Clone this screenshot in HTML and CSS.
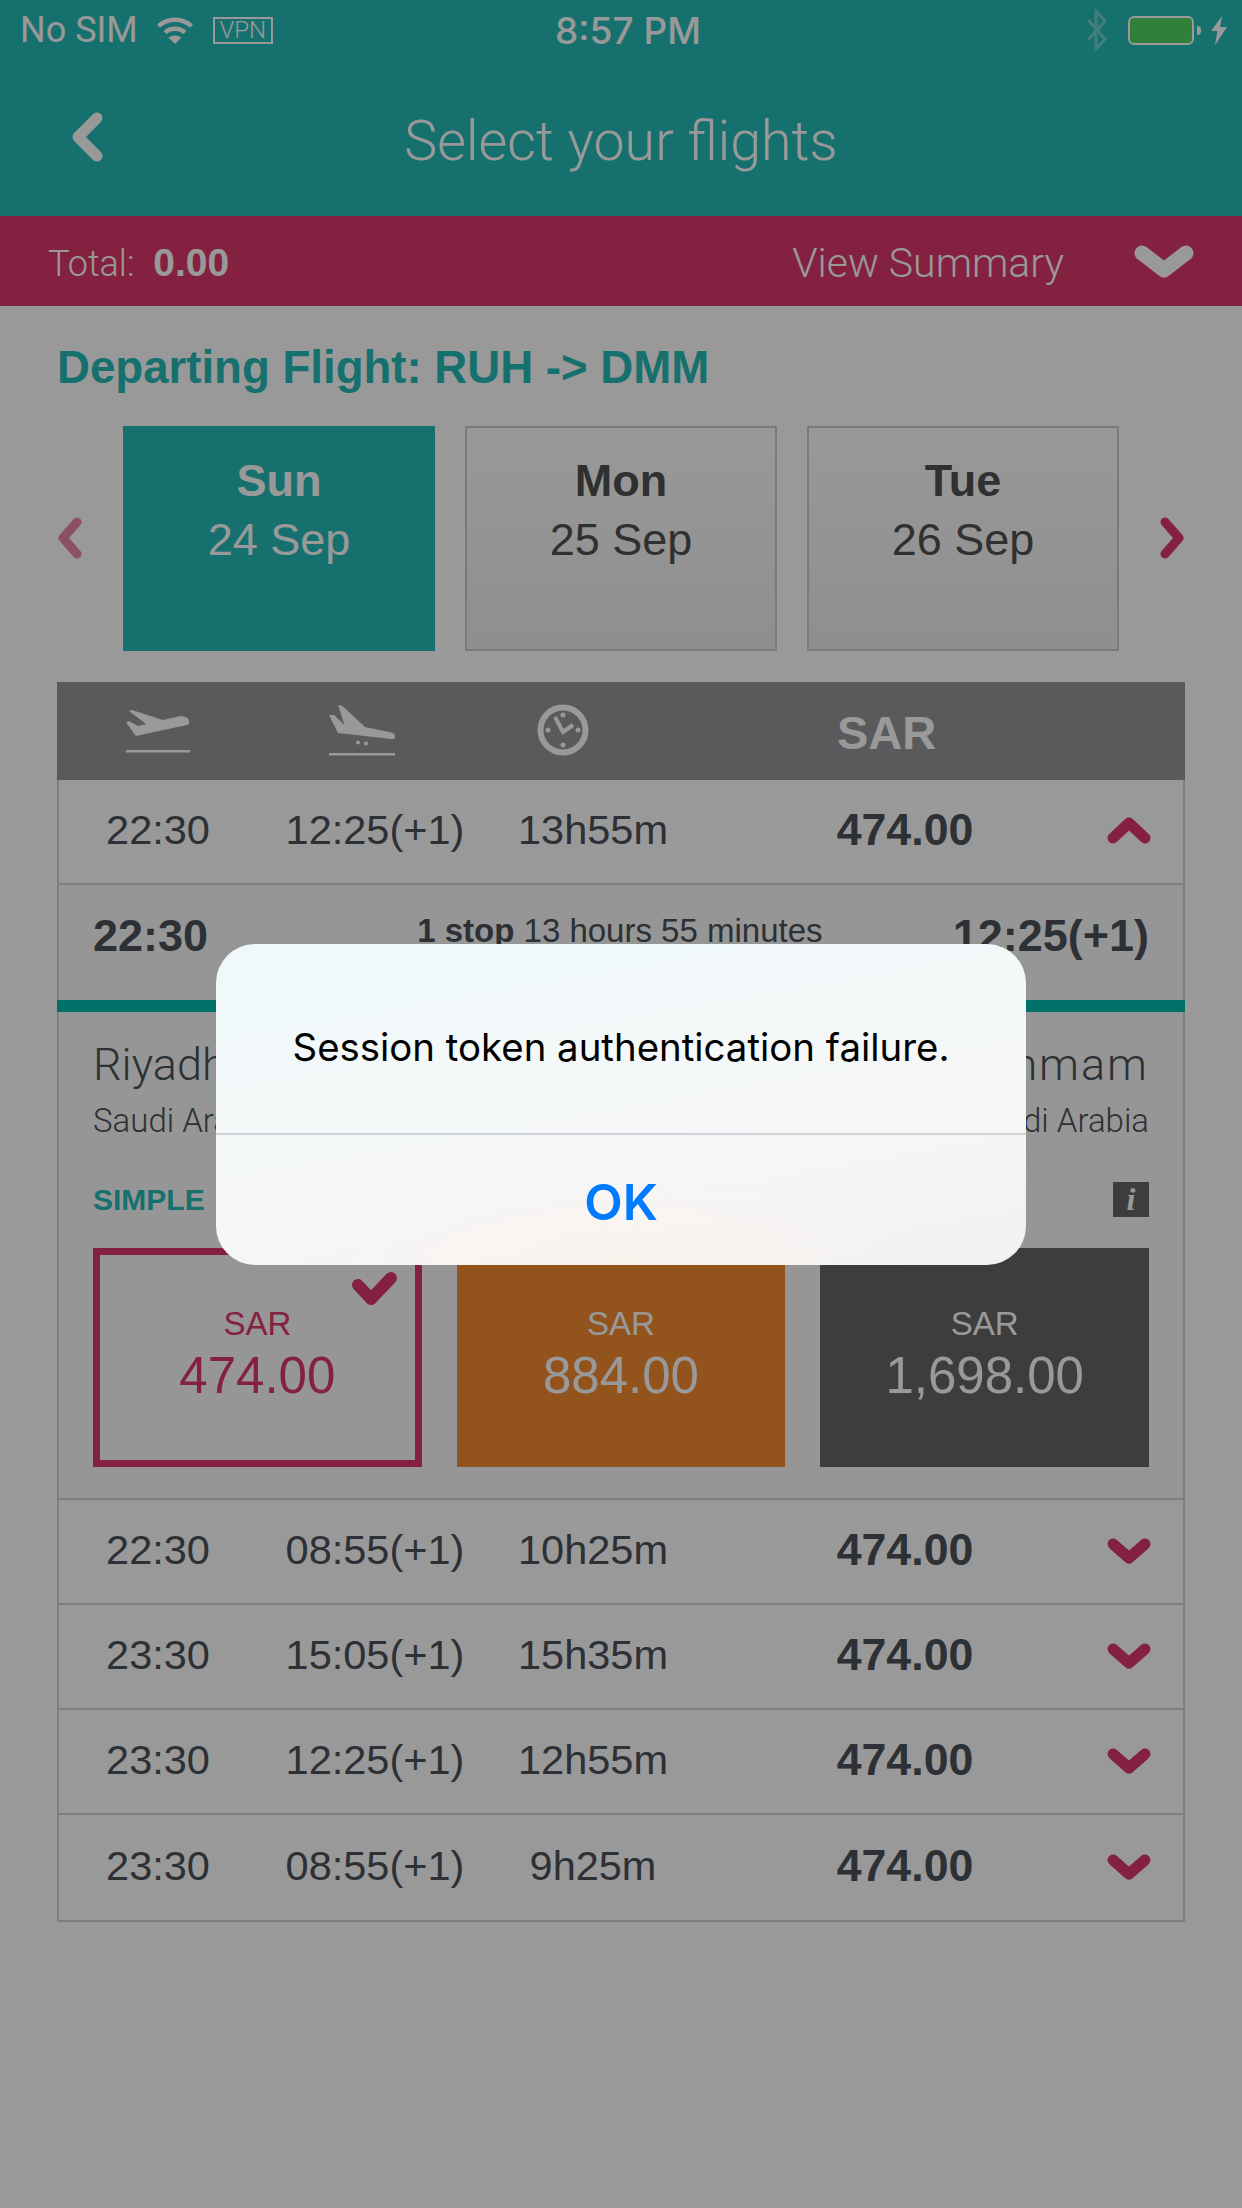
FILE: index.html
```html
<!DOCTYPE html>
<html lang="en">
<head>
    <meta charset="UTF-8">
    <meta name="viewport" content="width=device-width, initial-scale=1.0">
    <title>Select your flights</title>
    <link rel="stylesheet" href="styles.css">
</head>
<body>

<!-- Top bars -->
<header class="top">
    <div class="status">
        <div class="status-left">
            <span>No SIM</span>
            <svg class="wifi" viewBox="0 0 36 27"><path d="M1.5 9A25 25 0 0 1 34.500 9M8 15.500A15 15 0 0 1 28 15.500" fill="none" stroke="#fff" stroke-width="4.500"/><path d="M11.500 20.500Q18 16.500 24.500 20.500L18 27Z" fill="#fff"/></svg>
            <span class="vpn">VPN</span>
        </div>
        <div class="status-time">8:57 PM</div>
        <div class="status-right">
            <svg class="bt" viewBox="0 0 24 42"><path d="M3 11L20 30L11 40V2L20 12L3 31" fill="none" stroke="#fff" stroke-width="3"/></svg>
            <div class="battery"></div>
            <svg class="bolt" viewBox="0 0 16 29"><path d="M11 0L0 15H6.500L4 29L16 11H9Z" fill="#fff"/></svg>
        </div>
    </div>
    <div class="nav">
        <svg class="back" viewBox="0 0 32 50"><path d="M26 6L7 25L26 44" fill="none" stroke="#fff" stroke-width="11" stroke-linecap="round" stroke-linejoin="round"/></svg>
        <h1>Select your flights</h1>
    </div>
</header>

<div class="summary">
    <div class="total">Total: <b>0.00</b></div>
    <div class="view">View Summary</div>
    <svg class="view-arrow" viewBox="0 0 60 34"><path d="M8 8L30 25L52 8" fill="none" stroke="#fff" stroke-width="15" stroke-linecap="round" stroke-linejoin="round"/></svg>
</div>

<main class="content">
    <h2>Departing Flight: RUH -&gt; DMM</h2>

    <!-- Date picker -->
    <div class="dates">
        <svg class="date-arrow faded" viewBox="0 0 25 42"><path d="M20 5L6 21L20 37" fill="none" stroke="#dc376b" stroke-width="9" stroke-linecap="round" stroke-linejoin="round"/></svg>
        <div class="date-list">
            <div class="date active"><b>Sun</b><span>24 Sep</span></div>
            <div class="date"><b>Mon</b><span>25 Sep</span></div>
            <div class="date"><b>Tue</b><span>26 Sep</span></div>
        </div>
        <svg class="date-arrow" viewBox="0 0 25 42"><path d="M5 5L19 21L5 37" fill="none" stroke="#dc376b" stroke-width="9" stroke-linecap="round" stroke-linejoin="round"/></svg>
    </div>

    <!-- Flights table -->
    <div class="flights">
        <div class="flights-head">
            <svg class="takeoff" viewBox="0 0 64 44"><path d="M63 11Q63 7 55 6L37 10L6 0L3 1L20 14L12 16L3 11L0 12.500L10 26L61 15Q64 14 63 11Z" fill="#fff"/><rect y="40" width="64" height="2.500" fill="#fff"/></svg>
            <svg class="landing" viewBox="0 0 66 51"><path d="M9 0L13.500 1L36 22L60 27Q67 28 66 32Q65.500 35 62 34L9 28L0 10L5 10L15.500 20Z" fill="#fff"/><circle cx="29" cy="37.500" r="2" fill="#fff"/><circle cx="37" cy="38.500" r="2" fill="#fff"/><rect y="48" width="66" height="2.500" fill="#fff"/></svg>
            <svg class="clock" viewBox="0 0 52 52"><circle cx="26" cy="26" r="22.500" fill="none" stroke="#fff" stroke-width="6"/><path d="M18 13L26 28L36 21" fill="none" stroke="#fff" stroke-width="4"/><circle cx="26" cy="11" r="2.500" fill="#fff"/><circle cx="41" cy="26" r="2.500" fill="#fff"/><circle cx="26" cy="41" r="2.500" fill="#fff"/><circle cx="11" cy="26" r="2.500" fill="#fff"/></svg>
            <div class="head-sar">SAR</div>
        </div>

        <div class="row">
            <span>22:30</span><span>12:25(+1)</span><span>13h55m</span><b>474.00</b>
            <svg class="chev" viewBox="0 0 44 28"><path d="M6 22L22 7L38 22" fill="none" stroke="#dc376b" stroke-width="11" stroke-linecap="round" stroke-linejoin="round"/></svg>
        </div>

        <div class="detail">
            <div class="detail-top">
                <b>22:30</b>
                <span class="stops"><b>1 stop</b> 13 hours 55 minutes</span>
                <b>12:25(+1)</b>
            </div>
            <div class="detail-body">
                <div class="cities">
                    <div>
                        <div class="city">Riyadh</div>
                        <div class="country">Saudi Arabia</div>
                    </div>
                    <div class="to">
                        <div class="city">Dammam</div>
                        <div class="country">Saudi Arabia</div>
                    </div>
                </div>
                <div class="fare-head">
                    <span class="fare-name">SIMPLE</span>
                    <span class="info">i</span>
                </div>
                <div class="fares">
                    <div class="fare picked">
                        <svg class="tick" viewBox="0 0 46 34"><path d="M7 13L20 27L40 6" fill="none" stroke="#dc376b" stroke-width="12" stroke-linecap="round" stroke-linejoin="round"/></svg>
                        <span>SAR</span><strong>474.00</strong>
                    </div>
                    <div class="fare orange"><span>SAR</span><strong>884.00</strong></div>
                    <div class="fare dark"><span>SAR</span><strong>1,698.00</strong></div>
                </div>
            </div>
        </div>

        <div class="row">
            <span>22:30</span><span>08:55(+1)</span><span>10h25m</span><b>474.00</b>
            <svg class="chev" viewBox="0 0 44 28"><path d="M6 8L22 22L38 8" fill="none" stroke="#dc376b" stroke-width="11" stroke-linecap="round" stroke-linejoin="round"/></svg>
        </div>
        <div class="row">
            <span>23:30</span><span>15:05(+1)</span><span>15h35m</span><b>474.00</b>
            <svg class="chev" viewBox="0 0 44 28"><path d="M6 8L22 22L38 8" fill="none" stroke="#dc376b" stroke-width="11" stroke-linecap="round" stroke-linejoin="round"/></svg>
        </div>
        <div class="row">
            <span>23:30</span><span>12:25(+1)</span><span>12h55m</span><b>474.00</b>
            <svg class="chev" viewBox="0 0 44 28"><path d="M6 8L22 22L38 8" fill="none" stroke="#dc376b" stroke-width="11" stroke-linecap="round" stroke-linejoin="round"/></svg>
        </div>
        <div class="row">
            <span>23:30</span><span>08:55(+1)</span><span>9h25m</span><b>474.00</b>
            <svg class="chev" viewBox="0 0 44 28"><path d="M6 8L22 22L38 8" fill="none" stroke="#dc376b" stroke-width="11" stroke-linecap="round" stroke-linejoin="round"/></svg>
        </div>
    </div>
</main>

<!-- Alert over dimmed page -->
<div class="dim">
    <div class="alert">
        <p class="alert-msg">Session token authentication failure.</p>
        <div class="alert-btn">OK</div>
    </div>
</div>

</body>
</html>
```

FILE: styles.css
```css
* {
  box-sizing: border-box;
}

body {
  margin: 0;
  width: 1242px;
  height: 2208px;
  overflow: hidden;
  position: relative;
  background-color: #fff;
  color: #4b5058;
  font-family: 'Liberation Sans', Arial, sans-serif;
}

/* Top bars */
.top {
  height: 216px;
  background-color: #25bcb7;
  color: #fff;
}

.status {
  height: 60px;
  padding: 0 15px 0 20px;
  display: grid;
  grid-template-columns: 1fr auto 1fr;
  align-items: center;
  font-family: Roboto, sans-serif;
  font-size: 36px;
}

.status-left {
  display: flex;
  align-items: center;
}

.wifi {
  width: 36px;
  height: 27px;
  margin-left: 19px;
}

.vpn {
  margin-left: 20px;
  width: 60px;
  height: 27px;
  border: 2px solid #fff;
  font-weight: 300;
  font-size: 24px;
  line-height: 23px;
  text-align: center;
}

.status-time {
  margin-left: 9px;
  font-family: Inter, sans-serif;
  font-weight: 500;
  font-size: 37px;
}

.status-right {
  display: flex;
  align-items: center;
  justify-content: flex-end;
}

.bt {
  width: 24px;
  height: 42px;
  opacity: 0.35;
}

.battery {
  position: relative;
  width: 66px;
  height: 29px;
  margin-left: 19px;
  background-color: #52d562;
  border: 2px solid #fff;
  border-radius: 6px;
}

.battery::after {
  content: "";
  position: absolute;
  right: -9px;
  top: 8px;
  width: 4px;
  height: 9px;
  background-color: #fff;
  border-radius: 0 4px 4px 0;
}

.bolt {
  width: 16px;
  height: 29px;
  margin-left: 17px;
}

.nav {
  height: 156px;
  position: relative;
  display: flex;
  align-items: center;
  justify-content: center;
}

.back {
  position: absolute;
  left: 71px;
  top: 52px;
  width: 32px;
  height: 50px;
}

h1 {
  margin: 6px 0 0 0;
  font-family: Roboto, sans-serif;
  font-weight: 300;
  font-size: 55.6px;
  line-height: 64px;
}

.summary {
  height: 90px;
  padding: 4px 48px 0 48px;
  display: flex;
  align-items: center;
  background-color: #dc376b;
  color: #fff;
}

.total {
  flex: 1;
  font-family: Roboto, sans-serif;
  font-weight: 300;
  font-size: 36px;
}

.total b {
  font-family: 'Liberation Sans', sans-serif;
  font-weight: bold;
  font-size: 39px;
  margin-left: 10px;
}

.view {
  font-family: Roboto, sans-serif;
  font-weight: 300;
  font-size: 41px;
}

.view-arrow {
  width: 60px;
  height: 34px;
  margin-left: 70px;
  margin-top: -2px;
}

/* Page content */
.content {
  padding: 0 57px;
}

h2 {
  margin: 0;
  padding-top: 37px;
  height: 120px;
  font-size: 45.6px;
  line-height: 50px;
  color: #25bcb7;
}

.dates {
  height: 225px;
  display: grid;
  grid-template-columns: 25px 996px 25px;
  justify-content: space-between;
  align-items: center;
}

.date-list {
  display: flex;
  gap: 30px;
}

.date-arrow {
  width: 25px;
  height: 42px;
  margin-top: -2px;
}

.date-arrow.faded {
  opacity: 0.6;
}

.date {
  width: 312px;
  height: 225px;
  padding-top: 23px;
  display: flex;
  flex-direction: column;
  align-items: center;
  border: 2px solid #ccc;
  background: linear-gradient(#fff, #eee);
  color: #505050;
  font-size: 45px;
  line-height: 59px;
}

.date.active {
  background: #25bcb7;
  border: none;
  padding-top: 25px;
  color: #fff;
}

/* Flights table */
.flights {
  margin-top: 31px;
  border: solid #d3d3d3;
  border-width: 0 2px 2px 2px;
  width: 1128px;
}

.flights-head {
  margin: 0 -2px;
  height: 98px;
  display: grid;
  grid-template-columns: 202px 205px 198px 1fr;
  align-items: center;
  justify-items: center;
  background-color: #969699;
  color: #fff;
}

.takeoff {
  width: 64px;
  height: 44px;
  margin-top: 2px;
}

.landing {
  width: 66px;
  height: 51px;
  margin-top: -2px;
}

.clock {
  width: 52px;
  height: 52px;
  margin-top: -2px;
}

.head-sar {
  font-weight: bold;
  font-size: 47px;
  padding-right: 74px;
  padding-top: 2px;
}

.row {
  height: 105px;
  padding-bottom: 3px;
  display: grid;
  grid-template-columns: 198px 236px 200px 414px 44px;
  align-items: center;
  justify-items: center;
  border-bottom: 2px solid #d3d3d3;
  font-size: 41.5px;
}

.row b {
  font-size: 44.7px;
  padding-left: 10px;
}

.row:last-child {
  border-bottom: none;
}

.chev {
  width: 44px;
  height: 28px;
}

.detail {
  border-bottom: 2px solid #d3d3d3;
  background-color: #fafafa;
}

.detail-top {
  height: 127px;
  margin: 0 -2px;
  padding: 0 36px 13px 36px;
  display: flex;
  justify-content: space-between;
  align-items: center;
  border-bottom: 12px solid #00bdae;
  font-size: 45px;
}

.stops {
  margin-left: 79px;
  margin-bottom: 11px;
  font-size: 33px;
}

.detail-body {
  padding: 0 34px;
  height: 486px;
}

.cities {
  display: flex;
  justify-content: space-between;
  padding-top: 18px;
}

.to {
  text-align: right;
}

.to .city {
  letter-spacing: 2px;
}

.city {
  font-family: Roboto, sans-serif;
  font-weight: 300;
  font-size: 45px;
  line-height: 69px;
}

.country {
  font-family: Roboto, sans-serif;
  font-weight: 300;
  font-size: 33px;
  line-height: 44px;
}

.fare-head {
  margin-top: 39px;
  height: 35px;
  display: flex;
  justify-content: space-between;
  align-items: center;
}

.fare-name {
  font-weight: bold;
  font-size: 30px;
  color: #25bcb7;
}

.info {
  width: 36px;
  height: 35px;
  background-color: #666;
  color: #fff;
  font-family: 'Liberation Serif', serif;
  font-style: italic;
  font-weight: bold;
  font-size: 32px;
  line-height: 35px;
  text-align: center;
}

.fares {
  margin-top: 31px;
  display: grid;
  grid-template-columns: repeat(3, 1fr);
  gap: 35px;
}

.fare {
  position: relative;
  height: 219px;
  padding-top: 56px;
  display: flex;
  flex-direction: column;
  align-items: center;
  color: #fff;
}

.fare span {
  font-size: 33px;
  line-height: 40px;
}

.fare strong {
  font-weight: normal;
  font-size: 51px;
  line-height: 64px;
}

.fare.picked {
  padding-top: 49px;
  border: 7px solid #dc376b;
  color: #dc376b;
}

.fare.orange {
  background-color: #f38a30;
}

.fare.dark {
  background-color: #666;
}

.tick {
  position: absolute;
  right: 18px;
  top: 17px;
  width: 46px;
  height: 34px;
}

/* Dim layer and alert */
.dim {
  position: absolute;
  left: 0;
  top: 0;
  width: 100%;
  height: 100%;
  display: flex;
  align-items: center;
  justify-content: center;
  background-color: rgba(0, 0, 0, 0.4);
}

.alert {
  width: 810px;
  height: 321px;
  border-radius: 39px;
  background:
    radial-gradient(ellipse 300px 90px at 50% 100%, #faf4ee, transparent),
    linear-gradient(170deg, #eef8fa 0%, #f5f8f9 45%, #f6f5f6 75%, #f1f1f1 100%);
  color: #000;
  font-family: Inter, sans-serif;
  text-align: center;
}

.alert-msg {
  margin: 0;
  height: 191px;
  padding-top: 79px;
  border-bottom: 2px solid #d0d3d8;
  font-size: 38.4px;
  line-height: 48px;
}

.alert-btn {
  height: 130px;
  padding-top: 37px;
  color: #007aff;
  font-weight: 600;
  font-size: 50px;
  line-height: 60px;
}
```
